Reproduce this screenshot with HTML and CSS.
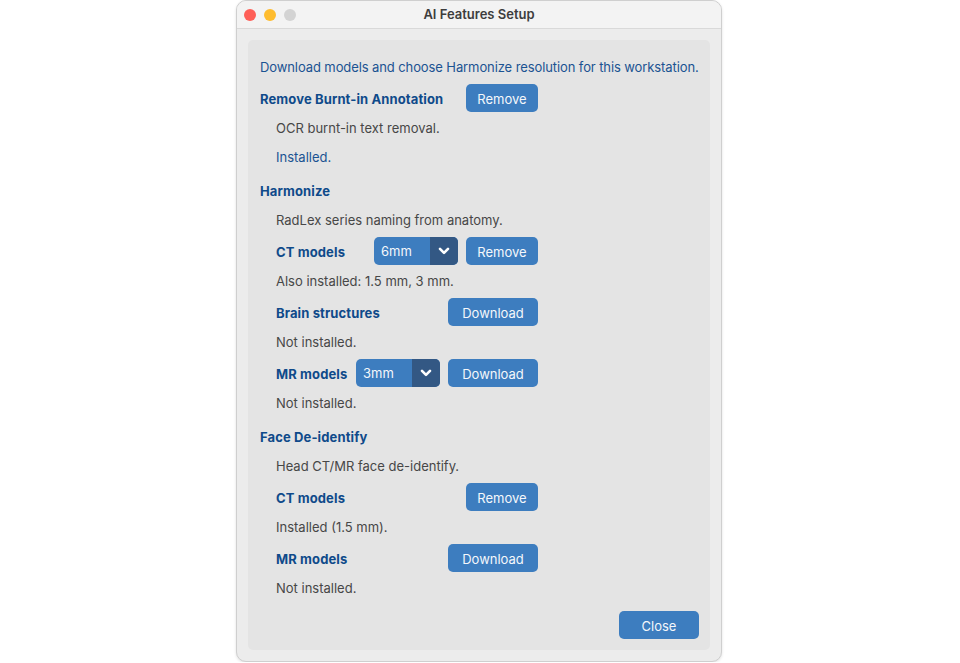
FILE: index.html
```html
<!DOCTYPE html>
<html lang="en">
<head>
<meta charset="utf-8">
<title>AI Features Setup</title>
<link rel="stylesheet" href="styles.css">
</head>
<body>
<div class="window">
  <div class="titlebar">
    <div class="lights">
      <span class="light red"></span>
      <span class="light yellow"></span>
      <span class="light gray"></span>
    </div>
    <div class="title">AI Features Setup</div>
  </div>
  <div class="content">
    <div class="panel">
      <div class="line intro">Download models and choose Harmonize resolution for this workstation.</div>

      <div class="row">
        <span class="label">Remove Burnt-in Annotation</span>
        <button class="btn w72">Remove</button>
      </div>
      <div class="line desc">OCR burnt-in text removal.</div>
      <div class="line desc ok">Installed.</div>

      <div class="line head section">Harmonize</div>
      <div class="line desc">RadLex series naming from anatomy.</div>
      <div class="row sub">
        <span class="label">CT models</span>
        <div class="group">
          <div class="combo"><span class="combo-val">6mm</span><span class="combo-arrow"><svg width="12" height="8" viewBox="0 0 12 8"><path d="M2 1.8l4 4 4-4" fill="none" stroke="#fff" stroke-width="2.6" stroke-linecap="round" stroke-linejoin="round"/></svg></span></div>
          <button class="btn w72">Remove</button>
        </div>
      </div>
      <div class="line desc">Also installed: 1.5 mm, 3 mm.</div>
      <div class="row sub">
        <span class="label">Brain structures</span>
        <button class="btn w90">Download</button>
      </div>
      <div class="line desc">Not installed.</div>
      <div class="row sub">
        <span class="label">MR models</span>
        <div class="group">
          <div class="combo"><span class="combo-val">3mm</span><span class="combo-arrow"><svg width="12" height="8" viewBox="0 0 12 8"><path d="M2 1.8l4 4 4-4" fill="none" stroke="#fff" stroke-width="2.6" stroke-linecap="round" stroke-linejoin="round"/></svg></span></div>
          <button class="btn w90">Download</button>
        </div>
      </div>
      <div class="line desc">Not installed.</div>

      <div class="line head section">Face De-identify</div>
      <div class="line desc">Head CT/MR face de-identify.</div>
      <div class="row sub">
        <span class="label">CT models</span>
        <button class="btn w72">Remove</button>
      </div>
      <div class="line desc">Installed (1.5 mm).</div>
      <div class="row sub">
        <span class="label">MR models</span>
        <button class="btn w90">Download</button>
      </div>
      <div class="line desc">Not installed.</div>

      <div class="footer">
        <button class="btn w80">Close</button>
      </div>
    </div>
  </div>
</div>
</body>
</html>
```
FILE: styles.css
```css
* { box-sizing: border-box; }
html, body { margin: 0; padding: 0; background: #ffffff; }
body {
  font-family: Inter, "Noto Sans", "Liberation Sans", sans-serif;
  font-size: 13px;
  color: #454545;
}
.window {
  margin-left: 236px;
  width: 486px;
  height: 662px;
  background: #ececec;
  border: 1px solid #cfcfcf;
  border-radius: 10px;
  display: flex;
  flex-direction: column;
  overflow: hidden;
  box-shadow: 0 1px 3px rgba(0,0,0,0.12);
}
.titlebar {
  height: 28px;
  flex: none;
  background: #f3f3f3;
  border-bottom: 1px solid #d9d9d9;
  display: flex;
  align-items: center;
  position: relative;
}
.lights {
  display: flex;
  gap: 8px;
  padding-left: 7px;
}
.light {
  width: 12px;
  height: 12px;
  border-radius: 50%;
  display: block;
}
.red { background: #fe5f57; }
.yellow { background: #febc2e; }
.gray { background: #d3d3d3; }
.title {
  position: absolute;
  left: 0;
  right: 0;
  top: 0;
  line-height: 27px;
  text-align: center;
  font-weight: 600;
  color: #3d3d3d;
}
.content {
  flex: 1;
  padding: 11px;
  display: flex;
  min-width: 0;
}
.panel {
  flex: 1;
  min-width: 0;
  background: #e4e4e4;
  border-radius: 5px;
  padding: 15px 11px 11px 12px;
  display: flex;
  flex-direction: column;
  gap: 4px;
}
.line {
  line-height: 25px;
  height: 25px;
  white-space: nowrap;
}
.intro { color: #1b5392; letter-spacing: -0.1px; }
.head { font-weight: 700; color: #0f4a8a; letter-spacing: 0.12px; }
.section { margin-top: 5px; }
.desc { padding-left: 16px; color: #474747; }
.ok { color: #1b5392; }
.row {
  height: 28px;
  width: 278px;
  display: flex;
  align-items: center;
  justify-content: space-between;
}
.row.sub { margin-left: 16px; width: 262px; }
.label {
  padding-top: 2px;
  line-height: 25px;
  font-weight: 700;
  color: #0f4a8a;
  letter-spacing: 0.12px;
  white-space: nowrap;
}
.group { display: flex; gap: 8px; }
.btn {
  height: 28px;
  border: none;
  border-radius: 5px;
  background: #3d7dbf;
  color: #f4f7fb;
  font-family: inherit;
  font-size: 13px;
  font-weight: 400;
  padding: 1px 0 0 0;
  text-align: center;
}
.w72 { width: 72px; }
.w80 { width: 80px; }
.w90 { width: 90px; }
.combo {
  width: 84px;
  height: 28px;
  border-radius: 5px;
  overflow: hidden;
  display: flex;
  background: #3d7dbf;
  color: #f4f7fb;
}
.combo-val {
  flex: 1;
  padding: 1px 0 0 7px;
  line-height: 27px;
}
.combo-arrow {
  width: 28px;
  background: #335884;
  display: flex;
  align-items: center;
  justify-content: center;
}
.combo-arrow svg { display: block; }
.footer {
  margin-top: auto;
  display: flex;
  justify-content: flex-end;
}
```
